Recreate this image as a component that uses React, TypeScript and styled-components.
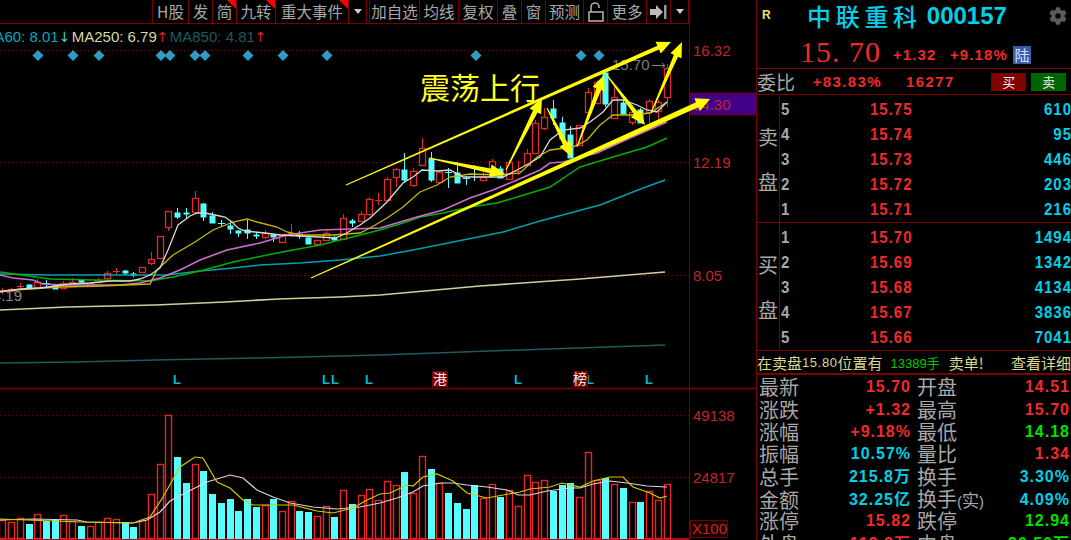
import React from 'react';
import styled, { createGlobalStyle } from 'styled-components';
import { FaCog } from 'react-icons/fa';

const GlobalStyle = createGlobalStyle`
  html, body {
    margin: 0;
    padding: 0;
    background: #000;
    overflow: hidden;
  }
`;

const LINE = '#7a0000';
const RED = '#f02a2a';
const CYAN = '#00d0e8';
const GRAY = '#a8a8a8';
const CJK = '"Noto Sans CJK SC", "Liberation Sans", sans-serif';
const NUM = '"Liberation Sans", "Noto Sans CJK SC", sans-serif';

const Page = styled.div`
  display: flex;
  width: 1071px;
  height: 540px;
  overflow: hidden;
  background: #000;
  font-family: ${NUM};
`;

const LeftColumn = styled.div`
  display: flex;
  flex-direction: column;
  width: 756px;
  flex: none;
  border-right: 1px solid ${LINE};
`;

const Toolbar = styled.div`
  display: flex;
  flex: none;
  box-sizing: border-box;
  width: 690px;
  height: 24px;
  padding-left: 152px;
  border-bottom: 1px solid ${LINE};
  border-right: 1px solid ${LINE};
`;

const Cell = styled.div<{ $w: number; $flag?: boolean; $gap?: number; $open?: boolean }>`
  position: relative;
  display: flex;
  align-items: center;
  justify-content: center;
  box-sizing: border-box;
  width: ${(p) => p.$w}px;
  margin-left: ${(p) => p.$gap ?? 0}px;
  border-right: 1px solid ${LINE};
  border-left: ${(p) => (p.$open ? `1px solid ${LINE}` : 'none')};
  color: ${GRAY};
  font-family: ${CJK};
  font-size: 15.5px;
  line-height: 23px;
  white-space: nowrap;

  ${(p) =>
    p.$flag &&
    `&::after {
      content: '';
      position: absolute;
      top: 0;
      right: 0;
      border-top: 9px solid #ff0000;
      border-left: 9px solid transparent;
    }`}
`;

const Caret = styled.span`
  border-top: 5px solid #ccc;
  border-left: 4px solid transparent;
  border-right: 4px solid transparent;
`;

const ChartArea = styled.div`
  position: relative;
  flex: 1;
  min-height: 0;
`;

const Legend = styled.div`
  position: absolute;
  top: 4px;
  left: -18px;
  display: flex;
  gap: 5px;
  font-size: 15px;
  line-height: 18px;
  white-space: nowrap;
`;

const LegendItem = styled.span<{ $color: string }>`
  color: ${(p) => p.$color};
`;

const LegendArrow = styled.span<{ $color: string }>`
  display: inline-block;
  width: 8px;
  color: ${(p) => p.$color};
  font-family: "DejaVu Sans", sans-serif;
  font-size: 14px;
  text-align: center;
`;

const ChartSvg = styled.svg`
  display: block;
  width: 756px;
  height: 516px;
`;

const AxisText = styled.text`
  fill: #c62424;
  font-family: ${NUM};
  font-size: 15px;
`;

const MarkText = styled.text`
  fill: #00b8d0;
  font-family: ${NUM};
  font-size: 13px;
  font-weight: 700;
`;

const BadgeText = styled.text`
  fill: #eee;
  font-family: ${CJK};
  font-size: 14px;
`;

const Side = styled.div`
  display: flex;
  flex-direction: column;
  flex: 1;
  min-width: 0;
  color: ${GRAY};
`;

const TitleBar = styled.div`
  position: relative;
  display: flex;
  align-items: center;
  flex: none;
  height: 31px;
  padding-left: 50px;
`;

const Badge = styled.span`
  position: absolute;
  left: 5px;
  top: 8px;
  color: #f0e060;
  font-size: 12px;
  font-weight: 700;
`;

const StockName = styled.span`
  color: ${CYAN};
  font-family: ${CJK};
  font-size: 24px;
  font-weight: 500;
  letter-spacing: 4.7px;
  line-height: 30px;
`;

const StockCode = styled.span`
  margin-left: 5px;
  color: ${CYAN};
  font-family: ${NUM};
  font-weight: 700;
  font-size: 24px;
  letter-spacing: 0;
`;

const GearSlot = styled.span`
  position: absolute;
  right: 4px;
  top: 7px;
  color: #5c5c5c;
  line-height: 0;
`;

const QuoteBar = styled.div`
  display: flex;
  align-items: center;
  flex: none;
  box-sizing: border-box;
  height: 38px;
  padding: 5px 0 0 43px;
  border-bottom: 1px solid ${LINE};
`;

const BigPrice = styled.span`
  width: 93px;
  color: ${RED};
  font-family: "Liberation Serif", serif;
  font-size: 30px;
  letter-spacing: 1px;
  white-space: pre;
`;

const QuoteDelta = styled.span<{ $w: number }>`
  width: ${(p) => p.$w}px;
  margin-top: 4px;
  color: ${RED};
  font-size: 15px;
  font-weight: 700;
  letter-spacing: 1.1px;
`;

const MarketTag = styled.span`
  width: 18px;
  height: 18px;
  margin-top: 5px;
  background: #3a5ca8;
  color: #cfe0ff;
  font-family: ${CJK};
  font-size: 15px;
  line-height: 18px;
  text-align: center;
`;

const RatioBar = styled.div`
  display: flex;
  align-items: center;
  flex: none;
  box-sizing: border-box;
  height: 26px;
  border-bottom: 1px solid ${LINE};
`;

const RatioLabel = styled.span`
  width: 56px;
  font-family: ${CJK};
  font-size: 19px;
  line-height: 25px;
`;

const RatioValue = styled.span<{ $w: number }>`
  width: ${(p) => p.$w}px;
  color: ${RED};
  font-size: 15px;
  font-weight: 700;
  letter-spacing: 1.4px;
`;

const TradeButton = styled.span<{ $bg: string }>`
  width: 35px;
  height: 18px;
  margin-right: 5px;
  background: ${(p) => p.$bg};
  color: #eee;
  font-family: ${CJK};
  font-size: 13px;
  line-height: 18px;
  text-align: center;
`;

const Block = styled.div`
  display: grid;
  grid-template-columns: 23px 1fr;
  flex: none;
  box-sizing: border-box;
  height: 128px;
  border-bottom: 1px solid ${LINE};
`;

const BlockLabel = styled.div`
  display: flex;
  flex-direction: column;
  align-items: center;
  justify-content: center;
  gap: 18px;
  border-right: 1px solid ${LINE};
  font-family: ${CJK};
  font-size: 20px;
  line-height: 27px;
`;

const BlockRows = styled.div`
  display: flex;
  flex-direction: column;
  justify-content: center;
`;

const OrderRow = styled.div`
  display: grid;
  grid-template-columns: 89px 1fr auto;
  align-items: center;
  height: 25.2px;
  padding-left: 1px;
  font-size: 15px;
  font-weight: 700;
  letter-spacing: 1px;

  & > span {
    transform: scaleY(1.15);
  }
`;

const OrderLevel = styled.span`
  color: ${GRAY};
`;

const OrderPrice = styled.span`
  color: ${RED};
`;

const OrderVolume = styled.span`
  margin-right: -1px;
  color: ${CYAN};
`;

const Notice = styled.div`
  display: flex;
  align-items: center;
  flex: none;
  box-sizing: border-box;
  height: 24px;
  border-bottom: 2px solid ${LINE};
  color: #d8d890;
  font-family: ${CJK};
  font-size: 15px;
  white-space: nowrap;
`;

const NoticeNum = styled.span`
  font-family: ${NUM};
  font-size: 13px;
  letter-spacing: 0.6px;
`;

const NoticeHands = styled.span`
  margin: 0 9px 0 8px;
  color: #00c800;
  font-family: ${NUM};
  font-size: 13px;
`;

const NoticeLink = styled.span`
  margin-left: auto;
`;

const Stats = styled.div`
  display: flex;
  flex-direction: column;
  padding-top: 1px;
`;

const StatRow = styled.div`
  display: grid;
  grid-template-columns: 40px 112px 40px 1fr;
  align-items: center;
  flex: none;
  height: 22.35px;
  padding-left: 2px;
  font-size: 16px;
  font-weight: 700;
  letter-spacing: 1px;
`;

const StatLabel = styled.span<{ $second?: boolean }>`
  margin-left: ${(p) => (p.$second ? 6 : 0)}px;
  color: ${GRAY};
  font-family: ${CJK};
  font-size: 20px;
  font-weight: 400;
  letter-spacing: 0;
  line-height: 22px;
  white-space: nowrap;
`;

const LabelParen = styled.span`
  font-family: ${NUM};
  font-size: 15px;
`;

const LabelInner = styled.span`
  font-size: 17px;
`;

const StatValue = styled.span<{ $color: string; $second?: boolean }>`
  margin-right: ${(p) => (p.$second ? 1 : 0)}px;
  color: ${(p) => p.$color};
  font-family: ${NUM};
  font-weight: 700;
  line-height: 22px;
  text-align: right;
  white-space: nowrap;
`;

// [bodyTop, bodyBottom, wickTop, wickBottom, up]
type Candle = [number, number, number, number, number];

const candles: Candle[] = [
  [291, 292, 288, 294, 1], [289, 291, 288, 292, 1], [286, 287, 283, 288, 1], [284, 288, 284, 288, 0],
  [282, 287, 279, 287, 1], [283, 284, 280, 287, 0], [285, 289, 285, 289, 0], [283, 288, 281, 288, 1],
  [282, 286, 278, 286, 1], [279, 282, 279, 284, 0], [283, 286, 282, 286, 1], [280, 282, 278, 282, 1],
  [273, 278, 271, 278, 1], [271, 272, 268, 274, 1], [270, 273, 270, 275, 0], [273, 275, 272, 277, 0],
  [267, 272, 267, 272, 1], [259, 263, 252, 265, 1], [236, 258, 236, 258, 1], [211, 227, 211, 231, 1],
  [212, 217, 208, 219, 0], [212, 214, 208, 219, 0], [198, 212, 191, 212, 1], [203, 217, 203, 221, 0],
  [215, 223, 212, 223, 0], [223, 224, 220, 227, 0], [225, 229, 221, 234, 0], [230, 233, 230, 237, 0],
  [229, 233, 220, 239, 0], [234, 236, 232, 239, 0], [233, 237, 230, 239, 1], [234, 237, 234, 242, 0],
  [234, 242, 234, 242, 1], [233, 234, 224, 237, 1], [234, 236, 231, 239, 0], [237, 244, 237, 244, 0],
  [240, 244, 240, 244, 1], [233, 240, 231, 240, 1], [237, 240, 236, 241, 0], [218, 239, 214, 239, 1],
  [220, 223, 219, 227, 0], [214, 221, 211, 221, 1], [199, 214, 197, 216, 1], [200, 201, 193, 205, 1],
  [179, 200, 177, 200, 1], [169, 177, 168, 187, 1], [169, 180, 153, 183, 0], [171, 185, 168, 187, 1],
  [148, 165, 138, 165, 1], [158, 180, 152, 182, 0], [172, 182, 170, 182, 1], [172, 173, 168, 188, 0],
  [172, 183, 162, 183, 0], [178, 179, 176, 185, 0], [174, 175, 165, 181, 0], [177, 180, 172, 180, 1],
  [161, 172, 159, 177, 1], [168, 178, 166, 178, 0], [162, 179, 160, 179, 1], [171, 172, 161, 175, 1],
  [153, 165, 149, 165, 1], [123, 153, 120, 153, 1], [117, 128, 108, 130, 1], [108, 118, 100, 125, 0],
  [122, 139, 117, 139, 0], [134, 158, 126, 158, 0], [125, 145, 125, 145, 1], [92, 112, 88, 112, 1],
  [82, 103, 80, 103, 1], [72, 104, 72, 107, 0], [97, 118, 87, 118, 1], [102, 114, 100, 114, 0],
  [112, 122, 105, 125, 1], [109, 123, 108, 123, 0], [101, 112, 99, 123, 1], [102, 111, 100, 119, 1],
  [68, 97, 64, 107, 1],
];

// [bar top, up]
const volumes: [number, number][] = [
  [520, 1], [522, 1], [518, 1], [524, 0], [514, 1], [521, 0], [520, 0], [515, 1], [521, 1], [526, 0],
  [526, 1], [522, 1], [518, 1], [519, 1], [522, 0], [527, 0], [520, 1], [494, 1], [464, 1], [415, 1],
  [457, 0], [483, 0], [464, 1], [471, 0], [494, 0], [503, 0], [499, 0], [511, 0], [499, 0], [507, 0],
  [505, 1], [499, 0], [511, 1], [501, 1], [511, 0], [512, 0], [516, 1], [506, 1], [517, 0], [490, 1],
  [504, 0], [495, 1], [489, 1], [500, 1], [481, 1], [485, 1], [472, 0], [493, 1], [456, 1], [469, 0],
  [483, 1], [493, 0], [503, 0], [509, 0], [485, 0], [498, 1], [484, 1], [497, 0], [490, 1], [506, 1],
  [475, 1], [482, 1], [480, 1], [491, 0], [485, 0], [483, 0], [497, 1], [452, 1], [480, 1], [478, 0],
  [484, 1], [488, 0], [502, 1], [502, 0], [491, 1], [500, 1], [484, 1],
];

const priceLines: { color: string; width: number; points: string }[] = [
  {
    color: '#1f5a60',
    width: 1.5,
    points: '0,363 75,362 155,360 260,358 380,355 520,350 665,345',
  },
  {
    color: '#cfcf9a',
    width: 1.6,
    points: '0,310 67,307 112,306 155,305 225,302 278,299 340,297 380,295 480,286 580,279 665,272',
  },
  {
    color: '#00a0b0',
    width: 1.5,
    points: '0,274 50,275 167,275 200,271 233,268 260,265 300,263 340,260 380,256 413,250 453,242 503,232 540,221 600,205 643,188 665,180',
  },
  {
    color: '#00b000',
    width: 1.5,
    points: '0,272 50,279 93,280 150,281 173,277 200,271 233,262 277,253 320,245 380,230 403,223 420,217 443,213 470,207 497,203 527,194 550,187 580,167 613,157 647,147 667,138',
  },
  {
    color: '#cc6ccc',
    width: 1.6,
    points: '0,275 13,278 33,280 43,284 67,285 120,285 140,283 160,278 180,270 200,260 227,250 260,243 287,235 320,230 380,228 390,225 417,217 443,210 470,198 493,190 517,180 540,170 550,163 563,162 597,153 630,138 667,122',
  },
  {
    color: '#c8b800',
    width: 1.3,
    points: '0,291 60,287 100,286 150,284 157,270 173,255 195,242 213,230 233,222 247,219 257,222 277,227 287,232 300,235 333,235 360,233 370,228 387,218 403,207 420,192 437,185 450,177 470,174 500,175 520,173 537,157 550,150 573,147 587,140 600,125 613,115 630,115 650,113 667,102',
  },
  {
    color: '#d8d8d8',
    width: 1.3,
    points: '0,292 20,289 40,288 55,286 70,284 90,283 110,281 130,281 140,279 150,275 160,268 168,250 178,225 190,216 197,213 205,213 215,215 225,217 232,222 238,228 245,231 255,232 265,233 280,235 300,236 320,237 335,238 345,234 360,225 370,218 387,202 403,183 413,177 422,170 437,171 450,170 463,177 483,177 503,177 517,170 530,163 540,157 550,140 563,130 580,128 590,122 603,112 613,100 623,100 637,105 647,110 657,112 667,102',
  },
];

const volumeLines: { color: string; points: string }[] = [
  {
    color: '#d8d8d8',
    points: '0,520 33,519 77,520 87,522 133,523 147,520 160,512 170,501 187,492 207,482 230,475 243,478 257,490 273,497 290,503 313,507 337,509 360,507 380,503 397,498 413,492 423,486 440,483 453,483 467,485 487,487 507,490 518,495 530,495 547,491 570,488 580,488 593,484 610,481 627,483 647,486 667,487',
  },
  {
    color: '#d4c800',
    points: '0,519 27,520 80,522 133,523 150,517 163,497 180,467 195,457 203,458 217,482 230,488 243,500 253,505 293,505 317,511 333,513 353,508 367,500 380,494 390,493 407,485 413,486 423,477 437,474 453,481 467,493 487,498 503,495 520,492 530,489 550,487 562,483 580,487 593,481 610,477 623,477 633,487 650,493 660,498 667,496',
  },
];

const gridLines = [50, 162, 275, 415, 477];
const diamonds = [38, 73, 99, 161, 170, 195, 205, 248, 283, 327, 476, 581, 599];
const lMarks = [177, 326, 335, 369, 518, 590, 649];

// tapered hand-drawn style arrow: [x1, y1, x2, y2, neck width, head length, head width]
const arrows: number[][] = [
  [346, 185, 671, 42, 4, 14, 13],
  [311, 278, 710, 99, 5.5, 14, 14],
  [506, 170, 542, 98, 5, 15, 13],
  [429, 158, 505, 174, 5, 15, 13],
  [547, 108, 572, 157, 5, 15, 13],
  [577, 147, 604, 75, 5, 15, 13],
  [606, 74, 645, 125, 4.5, 15, 13],
  [651, 113, 682, 42, 4.5, 15, 12],
];

const arrowPoints = ([x1, y1, x2, y2, neck, headLen, headW]: number[]) => {
  const len = Math.hypot(x2 - x1, y2 - y1);
  const ux = (x2 - x1) / len;
  const uy = (y2 - y1) / len;
  const nx = -uy;
  const ny = ux;
  const bx = x2 - ux * headLen;
  const by = y2 - uy * headLen;
  const pts = [
    [x1 + nx * 0.5, y1 + ny * 0.5],
    [bx + (nx * neck) / 2, by + (ny * neck) / 2],
    [bx + (nx * headW) / 2, by + (ny * headW) / 2],
    [x2, y2],
    [bx - (nx * headW) / 2, by - (ny * headW) / 2],
    [bx - (nx * neck) / 2, by - (ny * neck) / 2],
    [x1 - nx * 0.5, y1 - ny * 0.5],
  ];
  return pts.map((p) => p.join(',')).join(' ');
};

const barX = (i: number) => Math.round(2.3 + 8.74 * i);

const PriceChart: React.FC = () => (
  <ChartSvg viewBox="0 24 756 516">
    {gridLines.map((y) => (
      <line key={y} x1={0} x2={689} y1={y + 0.5} y2={y + 0.5} stroke="#700000" strokeDasharray="1 3" />
    ))}
    <line x1={689.5} x2={689.5} y1={24} y2={540} stroke="#7a0000" />
    <line x1={0} x2={756} y1={388.5} y2={388.5} stroke="#6a0000" strokeWidth={2} />
    <line x1={0} x2={689} y1={539} y2={539} stroke="#a01010" strokeWidth={2} />

    {diamonds.map((x) => (
      <polygon key={x} points={`${x},50 ${x + 5.5},55.5 ${x},61 ${x - 5.5},55.5`} fill="#2e9cc4" />
    ))}

    {candles.map(([top, bottom, wickTop, wickBottom, up], i) => {
      const x = barX(i);
      const color = up ? '#e82828' : '#55ffff';
      const flat = bottom - top <= 1;
      return (
        <g key={i}>
          <line x1={x + 0.5} x2={x + 0.5} y1={wickTop} y2={wickBottom} stroke={color} />
          {flat ? (
            <line x1={x - 3} x2={x + 4} y1={top + 0.5} y2={top + 0.5} stroke={color} />
          ) : (
            <rect
              x={x - 2.5}
              y={top + 0.5}
              width={6}
              height={bottom - top}
              fill={up ? '#000' : color}
              stroke={up ? color : 'none'}
              strokeWidth={1.3}
            />
          )}
        </g>
      );
    })}

    {priceLines.map((l) => (
      <polyline key={l.color} points={l.points} fill="none" stroke={l.color} strokeWidth={l.width} />
    ))}

    {lMarks.map((x) => (
      <MarkText key={x} x={x - 4} y={384}>L</MarkText>
    ))}
    <rect x={432} y={371} width={16} height={16} fill="#7a0000" />
    <BadgeText x={433} y={384}>港</BadgeText>
    <rect x={573} y={371} width={15} height={16} fill="#7a0000" />
    <BadgeText x={573} y={384}>榜</BadgeText>

    {volumes.map(([top, up], i) => {
      const x = barX(i);
      return up ? (
        <rect key={i} x={x - 2.5} y={top + 0.5} width={6} height={538 - top} fill="none" stroke="#e82424" strokeWidth={1.4} />
      ) : (
        <rect key={i} x={x - 3} y={top} width={7} height={539 - top} fill="#55ffff" />
      );
    })}
    {volumeLines.map((l) => (
      <polyline key={l.color} points={l.points} fill="none" stroke={l.color} strokeWidth={1.2} />
    ))}

    <rect x={690} y={93} width={66} height={22} fill="#40008a" stroke="#7a0000" />
    <AxisText x={693} y={56}>16.32</AxisText>
    <AxisText x={693} y={110}>14.30</AxisText>
    <AxisText x={693} y={168}>12.19</AxisText>
    <AxisText x={693} y={281}>8.05</AxisText>
    <AxisText x={693} y={421}>49138</AxisText>
    <AxisText x={693} y={483}>24817</AxisText>
    <rect x={690.5} y={520.5} width={37} height={17} fill="#1a0000" stroke="#6a0000" />
    <AxisText x={692} y={534}>X100</AxisText>

    <text x={22} y={301} textAnchor="end" fill="#8a8a8a" fontSize={15} fontFamily={NUM}>4.19</text>
    <text x={612} y={70} fill="#7c7c7c" fontSize={15} fontFamily={NUM}>15.70</text>
    <line x1={652} x2={665} y1={65.5} y2={65.5} stroke="#888" />
    <polyline points="662,63 665,65.5 662,68" fill="none" stroke="#888" />

    {arrows.map((a) => (
      <polygon key={a.join()} points={arrowPoints(a)} fill="#ffff00" />
    ))}
    <text x={420} y={99} fill="#ffff20" fontSize={30} fontFamily={CJK}>震荡上行</text>
  </ChartSvg>
);

const LockIcon = () => (
  <svg width="16" height="20" viewBox="0 0 16 20">
    <path d="M3 10V5a4 4 0 0 1 8 0v1" fill="none" stroke="#aaa" strokeWidth="1.6" />
    <rect x="1" y="10" width="14" height="9" fill="none" stroke="#aaa" strokeWidth="1.6" />
  </svg>
);

const JumpIcon = () => (
  <svg width="18" height="14" viewBox="0 0 18 14">
    <path d="M0 4h6V0l7 7-7 7v-4H0z" fill="#bbb" />
    <rect x="14" y="0" width="2.5" height="14" fill="#999" />
  </svg>
);

const asks = [
  ['5', '15.75', '610'],
  ['4', '15.74', '95'],
  ['3', '15.73', '446'],
  ['2', '15.72', '203'],
  ['1', '15.71', '216'],
];

const bids = [
  ['1', '15.70', '1494'],
  ['2', '15.69', '1342'],
  ['3', '15.68', '4134'],
  ['4', '15.67', '3836'],
  ['5', '15.66', '7041'],
];

const GREEN = '#00e000';

const stats: [React.ReactNode, string, string, React.ReactNode, string, string][] = [
  ['最新', '15.70', RED, '开盘', '14.51', RED],
  ['涨跌', '+1.32', RED, '最高', '15.70', RED],
  ['涨幅', '+9.18%', RED, '最低', '14.18', GREEN],
  ['振幅', '10.57%', CYAN, '量比', '1.34', RED],
  ['总手', '215.8万', CYAN, '换手', '3.30%', CYAN],
  [
    '金额',
    '32.25亿',
    CYAN,
    <>
      换手<LabelParen>(</LabelParen>
      <LabelInner>实</LabelInner>
      <LabelParen>)</LabelParen>
    </>,
    '4.09%',
    CYAN,
  ],
  ['涨停', '15.82', RED, '跌停', '12.94', GREEN],
  ['外盘', '119.3万', RED, '内盘', '96.50万', GREEN],
];

const OrderBlock: React.FC<{ label: [string, string]; rows: string[][] }> = ({ label, rows }) => (
  <Block>
    <BlockLabel>
      <span>{label[0]}</span>
      <span>{label[1]}</span>
    </BlockLabel>
    <BlockRows>
      {rows.map(([level, price, volume]) => (
        <OrderRow key={level}>
          <OrderLevel>{level}</OrderLevel>
          <OrderPrice>{price}</OrderPrice>
          <OrderVolume>{volume}</OrderVolume>
        </OrderRow>
      ))}
    </BlockRows>
  </Block>
);

const App: React.FC = () => {
  return (
    <Page>
      <GlobalStyle />
      <LeftColumn>
        <Toolbar>
          <Cell $w={37} $open>H股</Cell>
          <Cell $w={24}>发</Cell>
          <Cell $w={24} $flag>简</Cell>
          <Cell $w={39} $flag>九转</Cell>
          <Cell $w={73} $flag>重大事件</Cell>
          <Cell $w={18}><Caret /></Cell>
          <Cell $w={51} $gap={2} $open>加自选</Cell>
          <Cell $w={39}>均线</Cell>
          <Cell $w={39}>复权</Cell>
          <Cell $w={24}>叠</Cell>
          <Cell $w={24}>窗</Cell>
          <Cell $w={38}>预测</Cell>
          <Cell $w={24}><LockIcon /></Cell>
          <Cell $w={39}>更多</Cell>
          <Cell $w={24}><JumpIcon /></Cell>
          <Cell $w={18}><Caret /></Cell>
        </Toolbar>
        <ChartArea>
          <PriceChart />
          <Legend>
            <LegendItem $color="#00a8c0">
              MA60: 8.01<LegendArrow $color="#40d0d0">↓</LegendArrow>
            </LegendItem>
            <LegendItem $color="#d8d8a0">
              MA250: 6.79<LegendArrow $color="#e02020">↑</LegendArrow>
            </LegendItem>
            <LegendItem $color="#205a60">
              MA850: 4.81<LegendArrow $color="#e02020">↑</LegendArrow>
            </LegendItem>
          </Legend>
        </ChartArea>
      </LeftColumn>
      <Side>
        <TitleBar>
          <Badge>R</Badge>
          <StockName>中联重科</StockName>
          <StockCode>000157</StockCode>
          <GearSlot>
            <FaCog size={18} />
          </GearSlot>
        </TitleBar>
        <QuoteBar>
          <BigPrice>15. 70</BigPrice>
          <QuoteDelta $w={57}>+1.32</QuoteDelta>
          <QuoteDelta $w={63}>+9.18%</QuoteDelta>
          <MarketTag>陆</MarketTag>
        </QuoteBar>
        <RatioBar>
          <RatioLabel>委比</RatioLabel>
          <RatioValue $w={94}>+83.83%</RatioValue>
          <RatioValue $w={86}>16277</RatioValue>
          <TradeButton $bg="#800000">买</TradeButton>
          <TradeButton $bg="#006400">卖</TradeButton>
        </RatioBar>
        <OrderBlock label={['卖', '盘']} rows={asks} />
        <OrderBlock label={['买', '盘']} rows={bids} />
        <Notice>
          在卖盘<NoticeNum>15.80</NoticeNum>位置有
          <NoticeHands>13389手</NoticeHands>
          卖单!
          <NoticeLink>查看详细</NoticeLink>
        </Notice>
        <Stats>
          {stats.map(([l1, v1, c1, l2, v2, c2]) => (
            <StatRow key={v1}>
              <StatLabel>{l1}</StatLabel>
              <StatValue $color={c1}>{v1}</StatValue>
              <StatLabel $second>{l2}</StatLabel>
              <StatValue $color={c2} $second>{v2}</StatValue>
            </StatRow>
          ))}
        </Stats>
      </Side>
    </Page>
  );
};

export default App;
